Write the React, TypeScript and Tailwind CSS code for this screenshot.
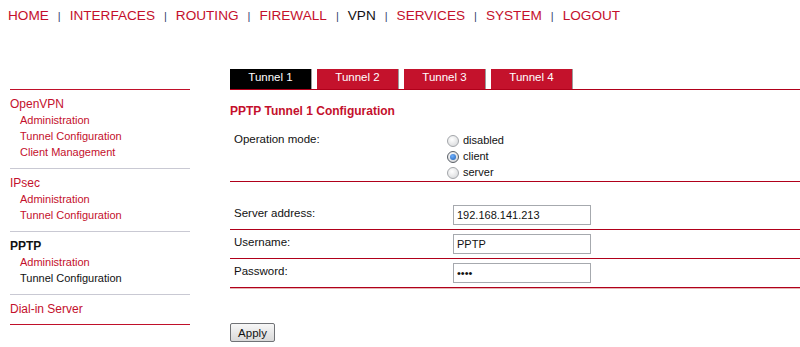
import React from "react";

const navItems = ["HOME", "INTERFACES", "ROUTING", "FIREWALL", "VPN", "SERVICES", "SYSTEM", "LOGOUT"];

interface SideGroup {
  title: string;
  active?: boolean;
  items: { label: string; active?: boolean }[];
}

const sideGroups: SideGroup[] = [
  {
    title: "OpenVPN",
    items: [{ label: "Administration" }, { label: "Tunnel Configuration" }, { label: "Client Management" }],
  },
  { title: "IPsec", items: [{ label: "Administration" }, { label: "Tunnel Configuration" }] },
  {
    title: "PPTP",
    active: true,
    items: [{ label: "Administration" }, { label: "Tunnel Configuration", active: true }],
  },
  { title: "Dial-in Server", items: [] },
];

const tabs = ["Tunnel 1", "Tunnel 2", "Tunnel 3", "Tunnel 4"];

const Radio = ({ label, checked }: { label: string; checked?: boolean }) => (
  <div className="flex h-[16px] items-start gap-[4px]">
    <span
      className={`mt-[4px] flex h-[12px] w-[12px] items-center justify-center rounded-full border ${
        checked
          ? "border-[#5a5f66] bg-[radial-gradient(circle_at_40%_35%,#ffffff,#c9ccd0)]"
          : "border-[#a3a6aa] bg-[radial-gradient(circle_at_40%_35%,#ffffff,#d2d4d6)]"
      }`}
    >
      {checked && <span className="h-[6px] w-[6px] rounded-full bg-[radial-gradient(circle_at_40%_35%,#6fb0ff,#1f5fb0)]" />}
    </span>
    <span className="pt-[1px] text-[11px] leading-[16px] text-[#111]">{label}</span>
  </div>
);

const FieldRow = ({
  label,
  value,
  type = "text",
  last,
}: {
  label: string;
  value: string;
  type?: string;
  last?: boolean;
}) => (
  <div
    className={`flex items-start border-b border-[#b0001a] pt-[4px] pb-[4px] ${
      last ? "shadow-[0_1px_0_#e7b4b4]" : ""
    }`}
  >
    <div className="w-[223px] pl-[4px] text-[11.5px] leading-[16px] text-[#111]">{label}</div>
    <input
      type={type}
      defaultValue={value}
      readOnly
      className="h-[20px] w-[138px] border border-[#a6a9ae] bg-white pl-[3px] text-[11px] text-[#111] outline-none"
    />
  </div>
);

export default function App() {
  return (
    <div className="min-h-[347px] bg-white font-['Liberation_Sans',Arial,sans-serif]">
      {/* top menu */}
      <div className="flex items-baseline gap-[9px] pt-[8px] pl-[8px]">
        {navItems.map((item, i) => (
          <React.Fragment key={item}>
            {i > 0 && <span className="text-[11px] leading-[16px] text-[#33406e]">|</span>}
            <span
              className={`text-[13.6px] leading-[16px] ${item === "VPN" ? "text-[#111]" : "text-[#c4102c]"}`}
            >
              {item}
            </span>
          </React.Fragment>
        ))}
      </div>

      <div className="mt-[45px] flex">
        {/* sidebar */}
        <div className="mt-[20px] ml-[10px] w-[180px] self-start border-t border-b border-[#c0102a]">
          {sideGroups.map((group, gi) => (
            <div
              key={group.title}
              className={`pt-[6px] ${gi === sideGroups.length - 1 ? "pb-[7px]" : "pb-[8px]"} ${
                gi > 0 ? "border-t border-[#c9c9d3]" : ""
              }`}
            >
              <div
                className={`text-[12px] leading-[16px] ${
                  group.active ? "font-bold text-[#111]" : "text-[#c4102c]"
                }`}
              >
                {group.title}
              </div>
              {group.items.map((it) => (
                <div
                  key={it.label}
                  className={`pl-[10px] text-[11px] leading-[16px] ${
                    it.active ? "text-[#111]" : "text-[#c4102c]"
                  }`}
                >
                  {it.label}
                </div>
              ))}
            </div>
          ))}
        </div>

        {/* content */}
        <div className="ml-[40px] flex-1">
          <div className="flex gap-[5px] border-b border-[#b0001a]">
            {tabs.map((t, i) => (
              <div
                key={t}
                className={`h-[20px] w-[82px] border-r border-[#9c9c9c] text-center text-[11.5px] leading-[16px] text-white ${
                  i === 0 ? "bg-black" : "bg-[#c4122c]"
                }`}
              >
                {t}
              </div>
            ))}
          </div>

          <div className="mt-[13px] text-[12px] leading-[16px] font-bold text-[#c4102c]">
            PPTP Tunnel 1 Configuration
          </div>

          <div className="flex border-b border-[#b0001a] pt-[12px] pb-[2px]">
            <div className="w-[217px] pl-[4px] text-[11.5px] leading-[16px] text-[#111]">Operation mode:</div>
            <div>
              <Radio label="disabled" />
              <Radio label="client" checked />
              <Radio label="server" />
            </div>
          </div>

          <div className="mt-[19px]">
            <FieldRow label="Server address:" value="192.168.141.213" />
            <FieldRow label="Username:" value="PPTP" />
            <FieldRow label="Password:" value="pptp" type="password" last />
          </div>

          <button className="mt-[35px] h-[19px] w-[45px] rounded-[2px] border border-[#707276] bg-[linear-gradient(#f7f7f7,#d9d9d9)] text-[11.5px] leading-[16px] text-[#111]">
            Apply
          </button>
        </div>
      </div>
    </div>
  );
}
